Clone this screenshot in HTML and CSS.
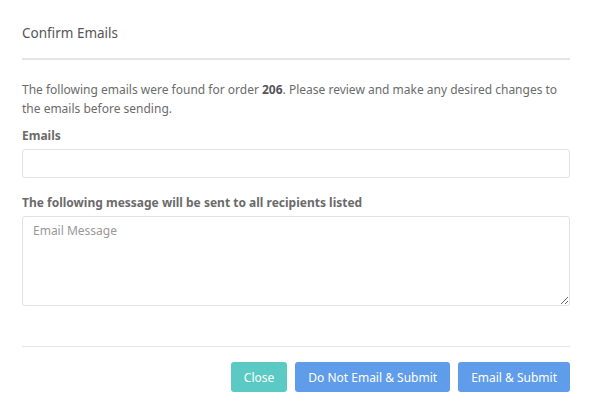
FILE: index.html
```html
<!DOCTYPE html>
<html>
<head>
<meta charset="utf-8">
<link rel="stylesheet" href="styles.css">
</head>
<body>
<div class="modal">
  <div class="modal-header">
    <h4 class="title">Confirm Emails</h4>
  </div>
  <div class="modal-body">
    <p class="intro">The following emails were found for order <strong>206</strong>. Please review and make any desired changes to the emails before sending.</p>
    <div class="group">
      <label class="label">Emails</label>
      <input class="input" type="text">
    </div>
    <div class="group">
      <label class="label">The following message will be sent to all recipients listed</label>
      <textarea class="textarea" placeholder="Email Message"></textarea>
    </div>
  </div>
  <div class="modal-footer">
    <button class="btn btn-teal">Close</button>
    <button class="btn btn-blue">Do Not Email &amp; Submit</button>
    <button class="btn btn-blue">Email &amp; Submit</button>
  </div>
</div>
</body>
</html>
```

FILE: styles.css
```css
* { box-sizing: border-box; }
html, body { margin: 0; padding: 0; background: #fff; }
body {
  font-family: "Noto Sans", "Open Sans", sans-serif;
  font-size: 12px;
  color: #6b6b6b;
}
.modal {
  width: 594px;
  padding: 0 24px 0 22px;
}
.modal-header {
  padding: 23px 0 15px;
  border-bottom: 2px solid #e5e5e5;
}
.title {
  margin: 0;
  font-size: 13.5px;
  font-weight: 400;
  line-height: 20px;
  color: #555;
}
.modal-body {
  padding: 20px 0 40px;
  border-bottom: 1px solid #e5e5e5;
}
.intro {
  margin: 0 0 10px;
  line-height: 19px;
}
.intro strong { font-weight: 700; color: #555; }
.group { margin-bottom: 17px; }
.group:last-child { margin-bottom: 0; }
.label {
  display: block;
  font-weight: 700;
  font-size: 12px;
  line-height: 16px;
  margin-bottom: 5px;
  color: #6b6b6b;
}
.input, .textarea {
  display: block;
  width: 100%;
  border: 1px solid #e2e2e2;
  border-radius: 3px;
  font-family: inherit;
  font-size: 12px;
  color: #555;
  background: #fff;
  outline: none;
}
.input { height: 29px; padding: 4px 10px; }
.textarea {
  height: 90px;
  padding: 5px 10px;
  resize: vertical;
}
.textarea::placeholder { color: #999; }
.modal-footer {
  display: flex;
  justify-content: flex-end;
  gap: 8px;
  padding-top: 15px;
}
.btn {
  height: 30px;
  border: 0;
  border-radius: 3px;
  color: #fff;
  font-family: inherit;
  font-size: 12px;
  padding: 0 13px;
  cursor: pointer;
}
.btn-teal { background: #5ccac4; }
.btn-blue { background: #5f9dea; }
```
